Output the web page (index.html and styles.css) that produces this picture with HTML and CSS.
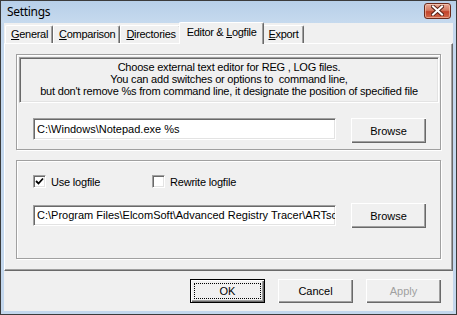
FILE: index.html
```
<!DOCTYPE html>
<html lang="en">
  <head>
    <meta charset="UTF-8" />
    <title>Settings</title>
    <link rel="stylesheet" href="styles.css">
  </head>
  <body>
    <div class="window">
      <!-- title bar -->
      <div class="titlebar">
        <span class="title">Settings</span>
        <div class="close-btn">
          <svg width="13" height="11" viewBox="0 0 13 11">
            <path d="M2 1.5 L11 9.5 M11 1.5 L2 9.5" stroke="#5a2418" stroke-width="4" stroke-linecap="square" />
            <path d="M2 1.5 L11 9.5 M11 1.5 L2 9.5" stroke="#fff" stroke-width="2" stroke-linecap="square" />
          </svg>
        </div>
      </div>

      <div class="client">
        <!-- tabs -->
        <div class="tabs">
          <div class="tab"><u>G</u>eneral</div>
          <div class="tab"><u>C</u>omparison</div>
          <div class="tab"><u>D</u>irectories</div>
          <div class="tab active">Editor &amp; <u>L</u>ogfile</div>
          <div class="tab"><u>E</u>xport</div>
        </div>

        <div class="page">
          <!-- editor group -->
          <div class="group group-editor">
            <div class="note">
              <p>Choose external text editor for REG , LOG files.</p>
              <p>You can add switches or options to &nbsp;command line,</p>
              <p>but don't remove %s from command line, it designate the position of specified file</p>
            </div>
            <div class="row row-editor">
              <div class="edit">C:\Windows\Notepad.exe %s</div>
              <div class="btn">Browse</div>
            </div>
          </div>

          <!-- logfile group -->
          <div class="group group-log">
            <div class="checks">
              <label class="check check-use">
                <span class="box">
                  <svg width="9" height="9" viewBox="0 0 9 9">
                    <path d="M1 4 L3.5 6.5 L8 1.5" stroke="#000" stroke-width="1.8" fill="none" />
                  </svg>
                </span>
                Use logfile
              </label>
              <label class="check">
                <span class="box"></span>
                Rewrite logfile
              </label>
            </div>
            <div class="row row-log">
              <div class="edit">C:\Program Files\ElcomSoft\Advanced Registry Tracer\ARTsc</div>
              <div class="btn">Browse</div>
            </div>
          </div>
        </div>

        <!-- dialog buttons -->
        <div class="footer">
          <div class="btn default"><span class="focus">OK</span></div>
          <div class="btn">Cancel</div>
          <div class="btn disabled">Apply</div>
        </div>
      </div>
    </div>
  </body>
</html>
```

FILE: styles.css
```
:root {
  --face: #f0f0f0;
  --shadow: #a0a0a0;
  --dark: #696969;
  --light: #e3e3e3;
  --frame: #c3d7ed;
}

* {
  margin: 0;
  padding: 0;
  box-sizing: border-box;
}

body {
  font-family: "Liberation Sans", Arial, sans-serif;
  font-size: 11px;
  color: #000;
  background: #fff;
  width: 457px;
  height: 315px;
  overflow: hidden;
}

.window {
  width: 457px;
  height: 315px;
  border: 1px solid #3b3b3b;
  padding: 0 3px 3px 3px;
  background: var(--frame);
  display: flex;
  flex-direction: column;
}

/* title bar */
.titlebar {
  height: 22px;
  display: flex;
  align-items: center;
  justify-content: space-between;
  background: linear-gradient(to bottom, #b7cfe8, #c6daee);
  margin: 0 -3px;
  padding: 0 5px 0 6px;
}

.title {
  font-family: "Noto Sans", "Open Sans", sans-serif;
  font-size: 12px;
  letter-spacing: -0.3px;
  color: #000;
  padding-bottom: 1px;
}

.close-btn {
  width: 27px;
  height: 16px;
  margin-top: -3px;
  border: 1px solid #6b2a1c;
  border-radius: 3px;
  background: linear-gradient(to bottom, #e8a996 0%, #d47a62 45%, #c2432a 55%, #d2694c 100%);
  box-shadow: inset 0 0 0 1px rgba(255, 220, 200, 0.5);
  display: flex;
  align-items: center;
  justify-content: center;
}

/* client area */
.client {
  flex: 1;
  background: var(--face);
  display: flex;
  flex-direction: column;
}

.tabs {
  height: 20px;
  display: flex;
  align-items: flex-end;
  padding-left: 1px;
}

.tab {
  height: 18px;
  padding: 2px 4px 0 5px;
  border-top: 1px solid #fff;
  border-left: 1px solid #fff;
  border-right: 1px solid var(--dark);
  box-shadow: inset -1px 0 var(--shadow);
  border-radius: 2px 2px 0 0;
  white-space: nowrap;
  letter-spacing: -0.3px;
}

.tab.active {
  height: 22px;
  margin: 0 -2px -1px -2px;
  padding: 3px 7px 0 7px;
  background: var(--face);
  position: relative;
  z-index: 1;
}

.page {
  height: 228px;
  border: 1px solid #fff;
  border-right-color: var(--dark);
  border-bottom-color: var(--dark);
  box-shadow: inset -1px -1px var(--shadow);
  padding: 10px 11px 10px 11px;
  display: flex;
  flex-direction: column;
  gap: 10px;
}

/* group boxes */
.group {
  border: 1px solid var(--shadow);
  box-shadow: inset 1px 1px #fff, 1px 1px #fff;
  width: 425px;
}

.group-editor {
  height: 96px;
  padding: 2px 1px 0 2px;
}

.group-log {
  height: 99px;
  padding: 14px 0 0 16px;
}

.note {
  height: 46px;
  border: 1px solid var(--shadow);
  border-right-color: #fff;
  border-bottom-color: #fff;
  box-shadow: inset 1px 1px var(--dark), inset -1px -1px var(--light);
  padding-top: 3px;
  text-align: center;
  line-height: 12px;
  letter-spacing: -0.2px;
}

.row {
  display: flex;
  gap: 15px;
}

.row-editor {
  margin: 15px 0 0 14px;
  align-items: flex-start;
}

.row-log {
  margin-top: 15px;
  align-items: center;
}

.edit {
  width: 303px;
  height: 22px;
  background: #fff;
  border: 1px solid var(--shadow);
  border-right-color: #fff;
  border-bottom-color: #fff;
  box-shadow: inset 1px 1px var(--dark), inset -1px -1px var(--light);
  padding: 0 0 0 3px;
  line-height: 20px;
  white-space: nowrap;
  overflow: hidden;
}

.row-log .edit {
  height: 21px;
  line-height: 19px;
}

/* checkboxes */
.checks {
  display: flex;
  height: 13px;
  align-items: center;
  letter-spacing: -0.2px;
}

.check {
  display: flex;
  align-items: center;
  gap: 5px;
}

.check-use {
  width: 119px;
}

.box {
  width: 13px;
  height: 13px;
  background: #fff;
  border: 1px solid var(--shadow);
  border-right-color: #fff;
  border-bottom-color: #fff;
  box-shadow: inset 1px 1px var(--dark), inset -1px -1px var(--light);
  display: flex;
  align-items: center;
  justify-content: center;
}

/* buttons */
.btn {
  width: 75px;
  height: 25px;
  background: var(--face);
  box-shadow: inset 1px 1px #fff, inset -1px -1px var(--dark), inset -2px -2px var(--shadow);
  display: flex;
  align-items: center;
  justify-content: center;
}

.footer {
  display: flex;
  justify-content: flex-end;
  gap: 13px;
  padding: 8px 12px 0 0;
}

.footer .btn {
  height: 24px;
}

.btn.default {
  border: 1px solid #000;
  box-shadow: inset 1px 1px #fff, inset -1px -1px var(--dark), inset -2px -2px var(--shadow);
  padding: 3px;
  align-items: stretch;
}

.focus {
  flex: 1;
  border: 1px dotted #000;
  display: flex;
  align-items: center;
  justify-content: center;
}

.btn.disabled {
  color: var(--shadow);
}
```
